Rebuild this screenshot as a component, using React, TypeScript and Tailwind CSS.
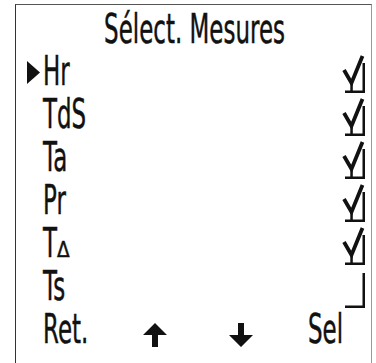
import React from "react";

const lcd = { fontFamily: '"DejaVu Sans", sans-serif' };

const Txt = ({ children, origin = "origin-left" }: { children: React.ReactNode; origin?: string }) => (
  <span className={`inline-block [transform:scaleX(0.56)] ${origin} whitespace-nowrap [-webkit-text-stroke:0.5px_#111]`}>
    {children}
  </span>
);

const Box = ({ checked }: { checked: boolean }) => (
  <svg width="24" height="42" viewBox="0 0 24 42" className="block">
    <rect x="20.5" y={checked ? 9 : 4} width="2.5" height={checked ? 29.5 : 34.5} fill="#111" />
    <rect x="3" y="36.5" width="20" height="2.5" fill="#111" />
    {checked && (
      <>
        <polyline points="2,16 9.5,29 20.5,2" fill="none" stroke="#111" strokeWidth="3.8" strokeLinejoin="miter" />
        <rect x="8.3" y="28" width="2.5" height="9" fill="#111" />
      </>
    )}
  </svg>
);

const Row = ({ label, checked, active }: { label: React.ReactNode; checked: boolean; active?: boolean }) => (
  <div className="h-[43px] flex items-start justify-between pr-[5px]">
    <div className="h-[43px] leading-[43px] pl-[11px] flex">
      <div className="w-[16px] h-[43px] pt-[11px]">
        {active && (
          <svg width="13" height="23" viewBox="0 0 13 23" className="block">
            <polygon points="0,0 13,11.5 0,23" fill="#111" />
          </svg>
        )}
      </div>
      <Txt>{label}</Txt>
    </div>
    <div className="pt-[4px]">
      <Box checked={checked} />
    </div>
  </div>
);

const Arrow = ({ down }: { down?: boolean }) => (
  <svg width="24" height="24" viewBox="0 0 24 24" className={`block ${down ? "rotate-180" : ""}`}>
    <polygon points="12,0 24,12 15,12 15,24 9,24 9,12 0,12" fill="#111" />
  </svg>
);

export default function App() {
  return (
    <div className="w-[376px] h-[363px] bg-white text-[#111] overflow-hidden" style={lcd}>
      <div className="ml-[15px] mt-[4px] w-[357px] h-[359px] border-l border-t border-r border-l-[#333] border-t-[#555] border-r-[#999] text-[41px]">
        <div className="pt-[4px] h-[45px] leading-[41px] text-center pl-[3px]">
          <Txt origin="origin-center">Sélect. Mesures</Txt>
        </div>
        <Row label="Hr" checked active />
        <Row label="TdS" checked />
        <Row label="Ta" checked />
        <Row label="Pr" checked />
        <Row
          label={
            <>
              T
              <span className="inline-block text-[22px] leading-none [transform:scaleX(1.5)] origin-left">Δ</span>
            </>
          }
          checked
        />
        <Row label="Ts" checked={false} />
        <div className="h-[43px] leading-[43px] flex items-start">
          <div className="w-[127px] pl-[27px]">
            <Txt>Ret.</Txt>
          </div>
          <div className="w-[86px] pt-[15px]">
            <Arrow />
          </div>
          <div className="w-[79px] pt-[15px]">
            <Arrow down />
          </div>
          <div>
            <Txt>Sel</Txt>
          </div>
        </div>
      </div>
    </div>
  );
}
